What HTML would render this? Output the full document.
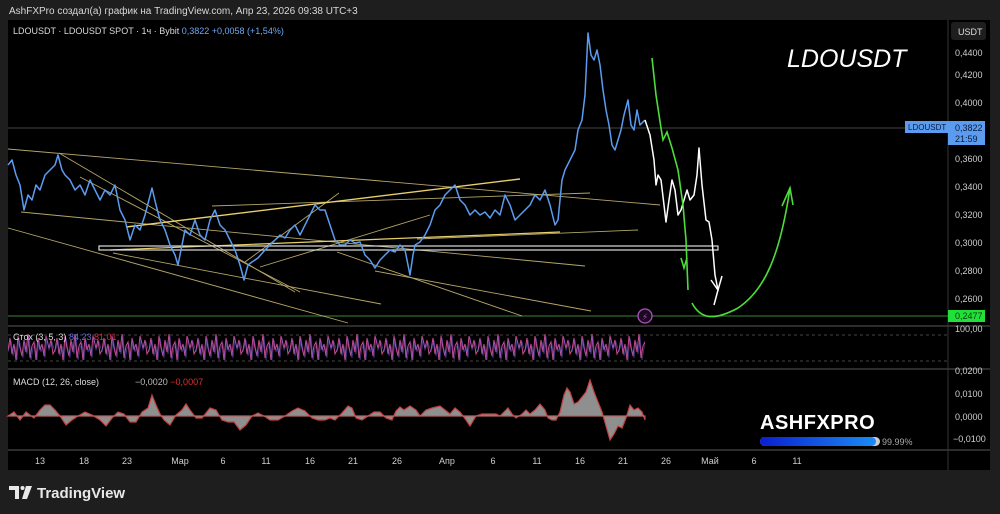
<!DOCTYPE html>
<html><head><meta charset="utf-8"><style>
html,body{margin:0;padding:0;background:#1e1e1e;width:1000px;height:514px;overflow:hidden}
svg{display:block}
text{font-family:"Liberation Sans","DejaVu Sans",sans-serif}
</style></head><body>
<svg width="1000" height="514" viewBox="0 0 1000 514" xmlns="http://www.w3.org/2000/svg">
<defs>
<pattern id="st" x="8" y="330" width="47" height="36" patternUnits="userSpaceOnUse">
<polyline fill="none" stroke="#c84c8c" stroke-width="1" points="0,20 2,8 4,24 6,14 8,30 10,6 12,18 14,26 16,10 18,22 20,4 22,28 24,16 26,12 28,30 30,8 32,20 34,14 36,26 38,6 41,18 43,10 45,24 47,20"/>
<polyline fill="none" stroke="#6a5ce0" stroke-width="0.8" opacity="0.6" points="0,22 3,10 5,26 7,16 9,30 11,8 13,20 15,28 17,12 19,24 21,6 23,30 25,18 27,14 29,30 31,10 33,22 35,16 37,28 39,8 41,20 44,12 47,22"/>
</pattern>
<linearGradient id="bar" x1="0" x2="1"><stop offset="0" stop-color="#0a1fd0"/><stop offset="1" stop-color="#1a8cf5"/></linearGradient>
</defs>
<rect width="1000" height="514" fill="#1e1e1e"/>
<text x="9" y="14" font-size="10" fill="#d8d8d8">AshFXPro создал(а) график на TradingView.com, Апр 23, 2026 09:38 UTC+3</text>
<rect x="8" y="20" width="982" height="450" fill="#000"/>
<line x1="948" y1="20" x2="948" y2="470" stroke="#333"/>
<line x1="8" y1="326" x2="990" y2="326" stroke="#3a3a3a" stroke-width="1.5"/>
<line x1="8" y1="369" x2="990" y2="369" stroke="#3a3a3a" stroke-width="1.5"/>
<line x1="8" y1="450" x2="990" y2="450" stroke="#3a3a3a" stroke-width="1.5"/>
<line x1="8" y1="335" x2="948" y2="335" stroke="#444" stroke-dasharray="3,3"/>
<line x1="8" y1="361" x2="948" y2="361" stroke="#444" stroke-dasharray="3,3"/>
<line x1="8" y1="128" x2="948" y2="128" stroke="#444"/>
<line x1="8" y1="316" x2="948" y2="316" stroke="#2f6b2f" stroke-width="1.2"/>
<g stroke="#d6c27a" stroke-width="0.9" opacity="0.85">
<line x1="8" y1="149" x2="660" y2="205"/>
<line x1="59" y1="153" x2="295" y2="292"/>
<line x1="21" y1="212" x2="585" y2="266"/>
<line x1="8" y1="228" x2="348" y2="323"/>
<line x1="80" y1="177" x2="300" y2="292"/>
<line x1="113" y1="253" x2="381" y2="304"/>
<line x1="245" y1="262" x2="339" y2="193"/>
<line x1="260" y1="267" x2="430" y2="215"/>
<line x1="337" y1="252" x2="522" y2="316"/>
<line x1="375" y1="271" x2="591" y2="311"/>
<line x1="212" y1="206" x2="590" y2="193"/>
<line x1="417" y1="239" x2="638" y2="230"/>
</g>
<line x1="126" y1="227" x2="520" y2="179" stroke="#e8cf6a" stroke-width="1.4"/>
<line x1="110" y1="250" x2="560" y2="232" stroke="#e8cf6a" stroke-width="1.2"/>
<rect x="99" y="246" width="619" height="4" fill="none" stroke="#ddd" stroke-width="1.2"/>
<polyline fill="none" stroke="#5b9cf0" stroke-width="1.5" stroke-linejoin="round" points="8,165 12,160 16,175 20,185 24,210 28,195 32,200 36,185 40,190 45,175 50,170 55,165 58,155 62,170 65,175 70,180 75,190 80,185 85,195 90,180 95,190 100,200 105,190 110,195 115,185 120,210 125,220 130,240 135,225 140,230 145,215 152,188 156,205 160,220 165,230 170,245 175,255 178,265 182,245 185,230 190,235 195,220 200,235 205,240 210,220 215,210 220,225 225,230 230,240 235,250 240,265 244,280 248,265 252,262 258,258 265,250 270,245 275,240 280,235 285,238 290,230 295,225 300,235 305,225 310,215 315,205 320,210 325,210 330,225 335,240 340,245 345,245 350,240 355,243 360,242 365,255 370,260 375,268 380,260 385,255 390,250 395,252 400,245 405,250 410,275 413,255 415,245 420,242 425,235 430,225 435,210 440,205 445,195 450,190 455,185 460,200 465,205 470,215 475,210 480,215 485,212 490,218 495,210 500,215 505,195 510,205 515,220 520,215 525,210 530,205 535,195 540,200 545,190 550,205 555,225 558,220 562,180 565,170 570,160 575,150 578,130 582,120 585,95 588,33 591,55 594,60 597,50 600,65 603,90 606,110 609,125 612,145 615,150 618,140 621,130 624,115 628,100 631,125 634,130 637,110 640,125 645,120"/>
<polyline fill="none" stroke="#fff" stroke-width="1.5" stroke-linejoin="round" points="645,120 650,135 654,160 656,185 658,175 661,180 664,205 666,222 669,200 672,180 675,190 678,215 681,210 684,200 687,190 690,200 694,195 697,175 699,148 702,185 706,220 709,222 712,240 715,275 718,290 714,305"/>
<polyline fill="none" stroke="#fff" stroke-width="1.5" points="711,280 718,290 722,276"/>
<path d="M652,58 L656,95 L661,128 L663,140 L667,132 L672,148 L678,170 L683,205 L686,240 L688,290" fill="none" stroke="#4ddc3a" stroke-width="1.6"/>
<polyline points="681,258 684,268 687,258" fill="none" stroke="#4ddc3a" stroke-width="1.6"/>
<path d="M692,303 C700,318 712,322 738,308 C765,290 780,255 790,188" fill="none" stroke="#4ddc3a" stroke-width="1.6"/>
<polyline points="782,206 790,188 793,205" fill="none" stroke="#4ddc3a" stroke-width="1.6"/>
<circle cx="645" cy="316" r="7" fill="#1a0a1f" stroke="#b14fc4" stroke-width="1.3"/>
<text x="645" y="320" font-size="9" fill="#b14fc4" text-anchor="middle">⚡</text>
<text x="787" y="67" font-size="25" font-style="italic" fill="#fff">LDOUSDT</text>
<text x="13" y="34" font-size="9" fill="#d8d8d8">LDOUSDT · LDOUSDT SPOT · 1ч · Bybit <tspan fill="#6ea8f5">0,3822</tspan><tspan fill="#6ea8f5"> +0,0058 (+1,54%)</tspan></text>
<rect x="951" y="22" width="35" height="18" rx="3" fill="#1e1e1e"/>
<text x="958" y="35" font-size="9" fill="#ddd">USDT</text>
<g font-size="9" fill="#cfcfcf">
<text x="955" y="56">0,4400</text><text x="955" y="78">0,4200</text><text x="955" y="106">0,4000</text>
<text x="955" y="162">0,3600</text><text x="955" y="190">0,3400</text><text x="955" y="218">0,3200</text>
<text x="955" y="246">0,3000</text><text x="955" y="274">0,2800</text><text x="955" y="302">0,2600</text>
<text x="955" y="332">100,00</text><text x="955" y="374">0,0200</text><text x="955" y="397">0,0100</text>
<text x="955" y="420">0,0000</text><text x="953" y="442">−0,0100</text>
</g>
<rect x="905" y="121" width="43" height="12" fill="#5b9cf0"/>
<text x="908" y="130" font-size="8" fill="#0b1a38">LDOUSDT</text>
<rect x="948" y="121" width="37" height="24" fill="#5b9cf0"/>
<text x="955" y="131" font-size="9" fill="#0b1a38">0,3822</text>
<text x="955" y="142" font-size="9" fill="#0b1a38">21:59</text>
<rect x="948" y="310" width="37" height="12" fill="#22e03a"/>
<text x="955" y="319" font-size="9" fill="#0b3a10">0,2477</text>
<rect x="8" y="330" width="637" height="36" fill="url(#st)"/>
<text x="13" y="340" font-size="9" fill="#ddd">Стох (3, 5, 3) <tspan fill="#5a6fe0">84,23</tspan> <tspan fill="#d03040">81,01</tspan></text>
<text x="13" y="385" font-size="9" fill="#ddd">MACD (12, 26, close)</text>
<text x="135" y="385" font-size="9" fill="#bbb">−0,0020 <tspan fill="#e03030">−0,0007</tspan></text>
<path d="M8,416 L14,412 L20,420 L26,412 L34,418 L40,410 L45,405 L50,405 L55,410 L60,416 L66,425 L72,420 L78,416 L85,412 L92,415 L100,420 L106,426 L112,418 L118,412 L124,414 L130,422 L136,422 L142,412 L148,408 L152,395 L156,405 L160,414 L164,420 L170,425 L176,415 L182,410 L186,404 L190,410 L196,418 L202,418 L210,408 L216,410 L222,420 L228,422 L234,422 L240,430 L246,425 L252,416 L258,413 L264,416 L270,420 L278,420 L285,416 L292,411 L298,408 L305,411 L312,418 L318,420 L325,420 L330,418 L335,420 L342,413 L348,406 L352,408 L356,418 L362,420 L368,416 L374,412 L380,412 L386,418 L392,420 L396,411 L400,407 L404,410 L410,406 L416,410 L420,416 L426,410 L432,408 L440,406 L445,410 L450,414 L455,408 L460,412 L466,420 L470,426 L476,416 L482,414 L490,414 L496,414 L500,416 L504,412 L508,408 L512,414 L516,418 L522,414 L526,410 L530,414 L535,410 L540,404 L545,410 L548,418 L552,420 L556,420 L560,412 L564,395 L567,388 L570,392 L574,404 L578,402 L582,397 L586,392 L590,380 L594,392 L598,402 L602,412 L606,426 L610,440 L614,434 L618,426 L622,428 L626,418 L630,405 L634,410 L638,408 L642,412 L645,420 L645,416 Z" fill="#a8a8a8" fill-opacity="0.85" stroke="#c84040" stroke-width="1.2"/>
<line x1="8" y1="416" x2="645" y2="416" stroke="#999" stroke-width="0.5"/>
<text x="760" y="429" font-size="20" font-weight="bold" fill="#fff" letter-spacing="0.5">ASHFXPRO</text>
<rect x="760" y="437" width="120" height="9" rx="4.5" fill="#ccc"/>
<rect x="760" y="437" width="116" height="9" rx="4.5" fill="url(#bar)"/>
<text x="882" y="445" font-size="9" fill="#aaa">99.99%</text>
<g font-size="9" fill="#cfcfcf" text-anchor="middle">
<text x="40" y="464">13</text><text x="84" y="464">18</text><text x="127" y="464">23</text><text x="180" y="464">Мар</text>
<text x="223" y="464">6</text><text x="266" y="464">11</text><text x="310" y="464">16</text><text x="353" y="464">21</text>
<text x="397" y="464">26</text><text x="447" y="464">Апр</text><text x="493" y="464">6</text><text x="537" y="464">11</text>
<text x="580" y="464">16</text><text x="623" y="464">21</text><text x="666" y="464">26</text><text x="710" y="464">Май</text>
<text x="754" y="464">6</text><text x="797" y="464">11</text>
</g>
<g fill="#e8e8e8">
<path d="M9,486 H19 V499 H15 V490 H9 Z"/>
<circle cx="22.5" cy="488" r="2"/>
<path d="M26,486 H32 L27,499 H22 Z"/>
</g>
<text x="37" y="498" font-size="15" fill="#e8e8e8" font-weight="bold">TradingView</text>
</svg>
</body></html>
